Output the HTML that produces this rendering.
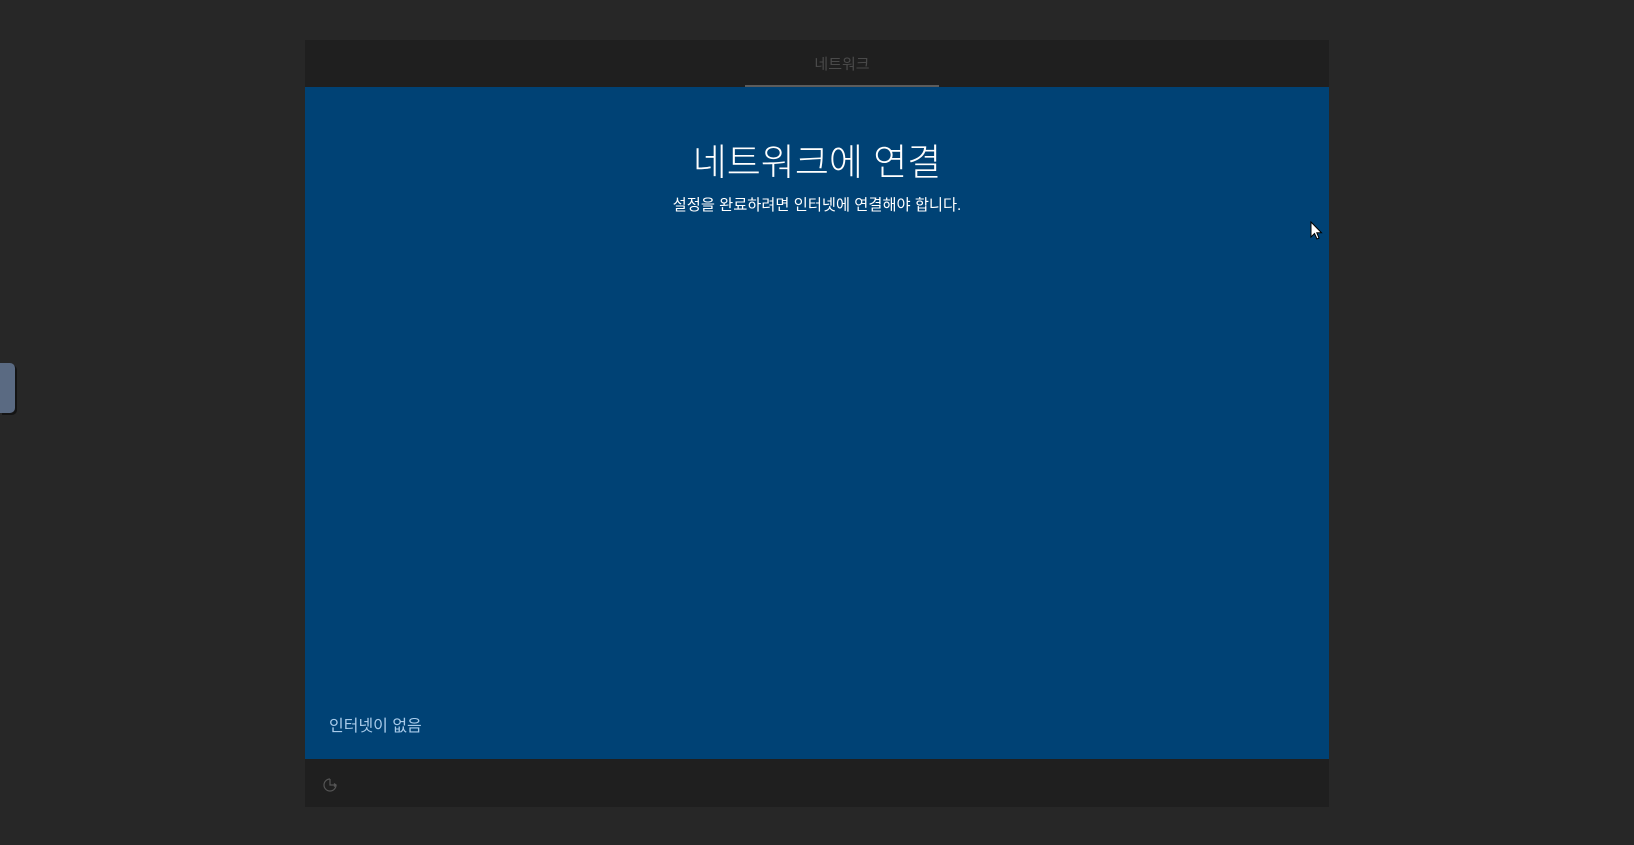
<!DOCTYPE html>
<html><head><meta charset="utf-8"><style>
html,body{margin:0;padding:0;width:1634px;height:845px;background:#272727;overflow:hidden;font-family:"Liberation Sans","Noto Sans CJK KR","NanumGothic",sans-serif;position:relative}
.win{position:absolute;left:305px;top:40px;width:1024px;height:767px;background:#1f1f1f}
.tab{position:absolute;left:440px;top:2px;width:194px;height:45px;text-align:center;line-height:45px;color:#4a4a4a;font-size:15px}
.ul{position:absolute;left:440px;top:45px;width:194px;height:2px;background:#5c5c5c}
.blue{position:absolute;left:0;top:47px;width:1024px;height:672px;background:#004275}
.t{position:absolute;left:0;width:1024px;text-align:center;color:#fff}
.tab2{position:absolute;left:0;top:363px;width:15px;height:50px;background:#5a6a82;border-radius:0 5px 5px 0;box-shadow:2px 2px 0 #141414}
</style></head><body>
<div class="tab2"></div>
<div class="win">
<div class="tab">네트워크</div>
<div class="ul"></div>
<div class="blue">
<div class="t" style="top:45px;font-size:37px;font-weight:300">네트워크에 연결</div>
<div class="t" style="top:106px;font-size:15.3px">설정을 완료하려면 인터넷에 연결해야 합니다.</div>
<div style="position:absolute;left:24px;top:625px;color:#a9cbea;font-size:16px">인터넷이 없음</div>
</div>
<svg style="position:absolute;left:16px;top:736px" width="18" height="18" viewBox="0 0 18 18"><path d="M9 3 A6 6 0 1 0 15 9" fill="none" stroke="#555" stroke-width="1.2"/><path d="M9 3 V9 H15 M13 7.5 L15 9 L13 10.5" fill="none" stroke="#555" stroke-width="1.2"/></svg>
</div>
<svg style="position:absolute;left:1310px;top:221px" width="14" height="20" viewBox="0 0 14 20"><path d="M1 1 V16 L4.5 12.5 L7 18 L9 17 L6.8 11.8 H11.5 Z" fill="#fff" stroke="#000" stroke-width="1"/></svg>
</body></html>
